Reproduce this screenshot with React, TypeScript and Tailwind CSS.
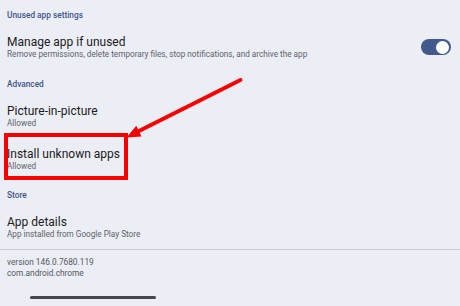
import React from "react"

const font = { fontFamily: "Roboto, 'Noto Sans', sans-serif" }

function SectionHeader({ children }: React.PropsWithChildren) {
  return <div className="pl-[7px] pt-[9px] pb-[4.5px] text-[8.3px] leading-[12px] font-medium text-[#3f5589]">{children}</div>
}

function Pref({
  title,
  summary,
  children,
}: React.PropsWithChildren & { title: string; summary: string }) {
  return (
    <div className="relative flex items-center justify-between py-[9.5px] pl-[7px] pr-[9px]">
      <div className="flex flex-col">
        <span className="text-[12px] leading-[14px] text-[#1c1b22]">{title}</span>
        <span className="text-[8.2px] leading-[10px] text-[#60616b]">{summary}</span>
      </div>
      {children}
    </div>
  )
}

function Toggle() {
  return (
    <div className="flex h-[16px] w-[30px] items-center justify-end rounded-full bg-[#455a8c] pr-[2px]">
      <div className="h-[13px] w-[13px] rounded-full bg-white" />
    </div>
  )
}

export default function App() {
  return (
    <div className="relative h-[306px] w-[460px] overflow-hidden bg-[#eceef6]" style={font}>
      <SectionHeader>Unused app settings</SectionHeader>
      <Pref title="Manage app if unused" summary="Remove permissions, delete temporary files, stop notifications, and archive the app">
        <Toggle />
      </Pref>

      <SectionHeader>Advanced</SectionHeader>
      <Pref title="Picture-in-picture" summary="Allowed" />
      <div className="relative">
        <Pref title="Install unknown apps" summary="Allowed" />
        <div className="absolute left-[4px] top-[-4px] h-[47px] w-[124px] border-4 border-[#f70000]" />
      </div>

      <SectionHeader>Store</SectionHeader>
      <Pref title="App details" summary="App installed from Google Play Store" />

      <div className="h-px bg-[#c9cad3]" />

      <div className="flex flex-col pl-[7px] pt-[7.5px] text-[8.3px] leading-[11px] text-[#55565f]">
        <span>version 146.0.7680.119</span>
        <span>com.android.chrome</span>
      </div>

      <div className="ml-[30px] mt-[16.5px] h-[3px] w-[126px] rounded-full bg-[#45464e]" />

      <svg className="pointer-events-none absolute inset-0" width="460" height="306" viewBox="0 0 460 306">
        <line x1="240.5" y1="80" x2="139" y2="131" stroke="#f70000" strokeWidth="4" strokeLinecap="round" />
        <polygon points="126.5,137.5 141.5,136.5 136.3,125.7" fill="#f70000" />
      </svg>
    </div>
  )
}
